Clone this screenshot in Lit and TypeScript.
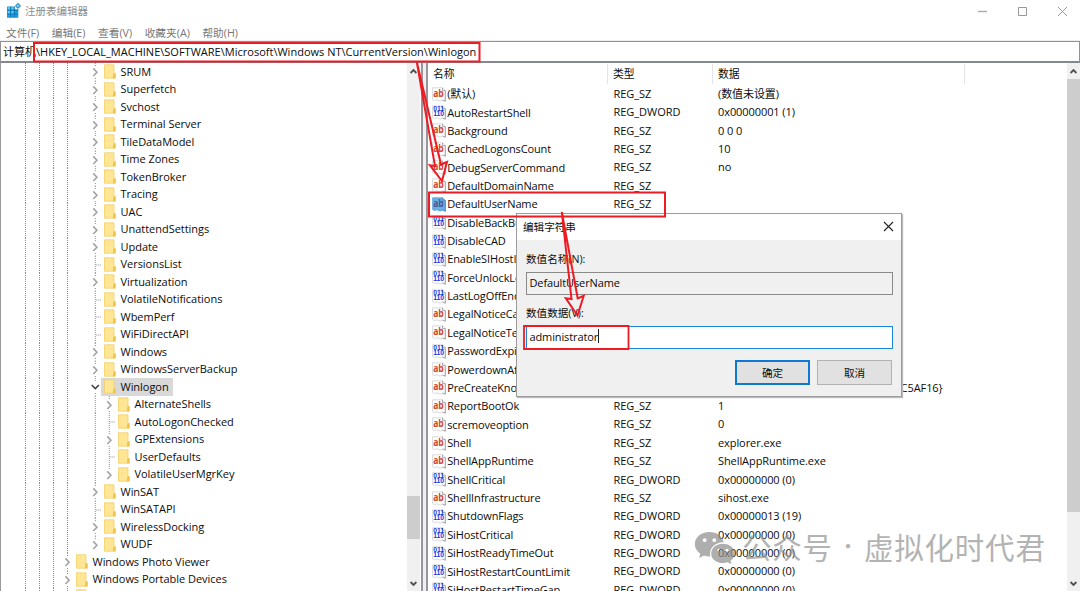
import { LitElement, html, svg, css } from "lit";
import { customElement, property } from "lit/decorators.js";

type TreeNode = { name: string; depth: number; kind: "closed" | "open" | "leaf" };
type Value = { name: string; dword?: boolean; data: string; selected?: boolean };

const node = (name: string, kind: TreeNode["kind"] = "closed", depth = 2): TreeNode => ({ name, kind, depth });

const TREE: TreeNode[] = [
  node("SRUM"), node("Superfetch"), node("Svchost"), node("Terminal Server"), node("TileDataModel"),
  node("Time Zones"), node("TokenBroker"), node("Tracing"), node("UAC"), node("UnattendSettings"),
  node("Update"), node("VersionsList", "leaf"), node("Virtualization"), node("VolatileNotifications", "leaf"),
  node("WbemPerf", "leaf"), node("WiFiDirectAPI", "leaf"), node("Windows"), node("WindowsServerBackup"),
  node("Winlogon", "open"),
  node("AlternateShells", "closed", 3), node("AutoLogonChecked", "leaf", 3), node("GPExtensions", "closed", 3),
  node("UserDefaults", "leaf", 3), node("VolatileUserMgrKey", "closed", 3),
  node("WinSAT"), node("WinSATAPI", "leaf"), node("WirelessDocking"), node("WUDF"),
  node("Windows Photo Viewer", "closed", 0), node("Windows Portable Devices", "closed", 0),
  node("", "closed", 0),
];

const sz = (name: string, data = "", selected = false): Value => ({ name, data, selected });
const dw = (name: string, data = "0x00000000 (0)"): Value => ({ name, data, dword: true });

const VALUES: Value[] = [
  sz("(默认)", "(数值未设置)"), dw("AutoRestartShell", "0x00000001 (1)"), sz("Background", "0 0 0"),
  sz("CachedLogonsCount", "10"), sz("DebugServerCommand", "no"), sz("DefaultDomainName"),
  sz("DefaultUserName", "", true), dw("DisableBackButton", ""), dw("DisableCAD", ""), dw("EnableSIHostIntegration", ""),
  dw("ForceUnlockLogon", ""), dw("LastLogOffEndTime", ""), sz("LegalNoticeCaption"), sz("LegalNoticeText"),
  dw("PasswordExpiryWarning", ""), sz("PowerdownAfterShutdown"),
  sz("PreCreateKnownFolders", "{A520A1A4-1780-4FF6-BD18-167343C5AF16}"), sz("ReportBootOk", "1"),
  sz("scremoveoption", "0"), sz("Shell", "explorer.exe"), sz("ShellAppRuntime", "ShellAppRuntime.exe"),
  dw("ShellCritical"), sz("ShellInfrastructure", "sihost.exe"), dw("ShutdownFlags", "0x00000013 (19)"),
  dw("SiHostCritical"), dw("SiHostReadyTimeOut"), dw("SiHostRestartCountLimit"), dw("SiHostRestartTimeGap"),
];

const FONT = css`
  :host { font-family: "Open Sans", "Noto Sans CJK SC", sans-serif; font-size: 11px; color: #0c0c0c; box-sizing: border-box; }
  * { box-sizing: border-box; }
  svg { display: block; }
`;

@customElement("reg-tree")
class RegTree extends LitElement {
  static styles = [FONT, css`
    :host { display: block; overflow: hidden; height: 528px; border-left: 1px solid #9a9a9e; background: #fff; }
    .row { display: flex; height: 17.5px; align-items: center; }
    .guides { flex: none; height: 17.5px; }
    .label { display: flex; align-items: center; height: 17.5px; white-space: pre; letter-spacing: -.03px; padding: 0 4px 0 3px; gap: 4.5px; }
    .label.on { background: #d9d9d9; }
    .label span { line-height: 16px; padding-bottom: .4px; }
  `];

  private guides(n: TreeNode) {
    const w = 72 + n.depth * 14;
    const own = 66.5 + n.depth * 14 - (n.depth ? 0.2 : 0);
    const lines = [24.5, 38.5, 52.5];
    if (n.depth > 0) lines.push(66.5);
    if (n.depth === 3) lines.push(94.3);
    const last = n.name === "VolatileUserMgrKey" || n.name === "WUDF";
    return html`<svg class="guides" width=${w} height="17.5" viewBox="0 0 ${w} 17.5">
      <g stroke="#8e8e8e" stroke-width="1" stroke-dasharray="1 1" fill="none">
        ${lines.map((x) => svg`<path d="M${x} 0V17.5" />`)}
        ${n.kind === "leaf" ? svg`<path d="M${own} 0V17.5M${own + 1} 9H${own + 7}" />`
          : svg`<path d="M${own} 0V3${last ? "" : "M" + own + " 15V17.5"}" />`}
      </g>
      ${n.kind === "closed" ? svg`<path d="M${own - 2} 5.4L${own + 1.6} 9.2L${own - 2} 13" fill="none" stroke="#a2a2a2" stroke-width="1.6" />` : null}
      ${n.kind === "open" ? svg`<path d="M${own - 3.6} 7L${own} 10.6L${own + 3.6} 7" fill="none" stroke="#444" stroke-width="1.6" />` : null}
    </svg>`;
  }

  render() {
    return TREE.map((n) => html`<div class="row">
      ${this.guides(n)}
      <div class="label ${n.kind === "open" ? "on" : ""}">
        <svg width="12" height="15" viewBox="0 0 12 15">
          <path d="M.5 .8H10V9.5H11.3V14.2H.5Z" fill="#ffe694" stroke="#f3cf63" stroke-width=".8" />
          <path d="M9.3 9.5H11.5V14.2H8.8Z" fill="#efc44f" />
        </svg><span>${n.name}</span>
      </div>
    </div>`);
  }
}

@customElement("value-icon")
class ValueIcon extends LitElement {
  @property({ type: Boolean }) dword = false;
  @property({ type: Boolean }) selected = false;
  static styles = css`
    :host { display: block; width: 14px; height: 15px; }
    svg { display: block; }
    .ab { font: bold 9.8px "Open Sans", sans-serif; }
    .bits { font: bold 6.6px "Liberation Sans", sans-serif; }
  `;
  render() {
    return html`<svg width="14" height="15" viewBox="0 0 14 15">
      <path d="M.6 .8H10.5L13.3 3.5V14.2L10.5 13L8 14.2L5 12.8L2.4 13.6L.6 12.6Z" fill=${this.selected ? "#6aaee6" : "#fff"} stroke=${this.selected ? "#5b9fd8" : "#cfcfcf"} stroke-width=".8" />
      <path d="M10.5 .8V3.6H13.3V14.2L10.5 13" fill="none" stroke=${this.selected ? "#4c8cc2" : "#a0a0a0"} stroke-width=".9" />
      ${this.dword
        ? svg`<text class="bits" fill="#1636e0" x="1.3" y="6.2" textLength="10.6" lengthAdjust="spacingAndGlyphs">011</text><text class="bits" fill="#1636e0" x="1.3" y="11.4" textLength="10.6" lengthAdjust="spacingAndGlyphs">110</text>`
        : svg`<text class="ab" fill=${this.selected ? "#4c5590" : "#d9442a"} x="1.3" y="9.6" textLength="10.4" lengthAdjust="spacingAndGlyphs">ab</text>`}
    </svg>`;
  }
}

@customElement("reg-values")
class RegValues extends LitElement {
  static styles = [FONT, css`
    :host { display: block; overflow: hidden; height: 528px; background: #fff; }
    .head, .row { display: grid; grid-template-columns: 180px 105px 252px 1fr; white-space: pre; }
    .head { height: 22px; padding-top: 1px; }
    .head span { border-right: 1px solid #e4e4e4; line-height: 20px; height: 20px; padding-left: 5px; font-size: 10.8px; }
    .head span:last-child { border: 0; }
    .row { height: 18.365px; line-height: 18px; }
    .name { display: flex; align-items: center; gap: 1.2px; padding-left: 4px; letter-spacing: -.12px; }
    .cell { padding-left: 5.5px; letter-spacing: -.03px; }
    .cell:last-child { padding-left: 5px; letter-spacing: -.08px; }
  `];
  render() {
    return html`<div class="head"><span>名称</span><span>类型</span><span>数据</span><span></span></div>
      ${VALUES.map((v) => html`<div class="row">
        <div class="name"><value-icon ?dword=${v.dword} ?selected=${v.selected}></value-icon><span>${v.name}</span></div>
        <div class="cell">${v.dword ? "REG_DWORD" : "REG_SZ"}</div><div class="cell">${v.data}</div>
      </div>`)}`;
  }
}

@customElement("scroll-track")
class ScrollTrack extends LitElement {
  @property({ type: Number }) before = 0;
  @property({ type: Number }) size = 0;
  static styles = css`
    :host { display: flex; flex-direction: column; width: 13px; height: 528px; background: #f0f0f0; }
    svg { display: block; flex: none; }
    .thumb { background: #cdcdcd; flex: none; }
    .fill { flex: 1; }
  `;
  render() {
    return html`
      <svg width="13" height="16" viewBox="0 0 13 16"><path d="M3.6 10L6.5 7.1L9.4 10" fill="none" stroke="#505050" stroke-width="1.8" /></svg>
      <div style="height:${this.before}px"></div>
      <div class="thumb" style="height:${this.size}px"></div>
      <div class="fill"></div>
      <svg width="13" height="16" viewBox="0 0 13 16"><path d="M3.6 7L6.5 9.9L9.4 7" fill="none" stroke="#505050" stroke-width="1.8" /></svg>`;
  }
}

@customElement("edit-dialog")
class EditDialog extends LitElement {
  static styles = [FONT, css`
    :host { display: flex; flex-direction: column; width: 386px; height: 184px; background: #f0f0f0; border: 1px solid #9c9c9c; box-shadow: 1px 1px 1px #bbb; }
    .title { display: flex; height: 26px; background: #fff; align-items: center; justify-content: space-between; padding: 0 7px 1px 6px; font-size: 10.6px; }
    .body { padding: 12px 8px 0 9px; display: flex; flex-direction: column; }
    label { height: 15px; line-height: 14px; font-size: 10.6px; }
    .field { height: 23px; border: 1px solid #8a8a8a; line-height: 19px; padding: 0 0 3px 2.5px; margin-top: 5px; margin-bottom: 11px; letter-spacing: -.12px; display: flex; align-items: center; }
    .field.active { background: #fff; border-color: #1c86dc; margin-bottom: 11px; }
    .caret { width: 1px; height: 14px; background: #222; }
    .actions { display: flex; justify-content: flex-end; gap: 7px; padding-right: 1px; }
    button { width: 75px; height: 25px; border: 1px solid #b2b2b2; background: #e1e1e1; font: inherit; font-size: 10.6px; color: inherit; padding: 0 0 1px; }
    button.ok { border: 2px solid #0f78d4; }
  `];
  render() {
    return html`<div class="title"><span>编辑字符串</span>
        <svg width="11" height="11" viewBox="0 0 11 11"><path d="M1 1L10 10M10 1L1 10" stroke="#222" stroke-width="1.1" /></svg></div>
      <div class="body">
        <label>数值名称(N):</label><div class="field">DefaultUserName</div>
        <label>数值数据(V):</label><div class="field active">administrator<i class="caret"></i></div>
        <div class="actions"><button class="ok">确定</button><button>取消</button></div>
      </div>`;
  }
}

@customElement("app-root")
class AppRoot extends LitElement {
  static styles = [FONT, css`
    :host { display: flex; flex-direction: column; position: relative; width: 1080px; height: 591px; overflow: hidden; background: #fff; }
    .titlebar { display: flex; height: 22px; align-items: center; padding: 0 12px 0 6px; color: #8d8d8d; }
    .titlebar span { flex: 1; padding: 0 0 1px 4px; font-size: 10.5px; }
    .controls { display: flex; gap: 29px; }
    .menu { display: flex; height: 19px; align-items: center; padding: 1px 0 0 6px; gap: 12.6px; color: #777; white-space: pre; font-size: 10.7px; }
    .address { height: 22px; border: 1px solid #929296; border-bottom: 2px solid #85898f; padding-left: 2px; line-height: 19px; white-space: pre; box-shadow: 0 -1px #eee; letter-spacing: .01px; }
    .main { display: flex; height: 528px; }
    reg-tree { width: 407px; }
    .split { width: 7px; border-left: 2px solid #96969c; border-right: 2px solid #96969c; background: #f0f0f0; margin: 0 0 0 1px; }
    reg-values { flex: 1; }
    edit-dialog { position: absolute; left: 516px; top: 213px; }
    .overlay { position: absolute; left: 0; top: 0; }
    .mark { position: absolute; left: 694px; top: 526px; display: flex; align-items: center; height: 40px; font-size: 29.5px; line-height: 40px; color: #949494; opacity: .7; letter-spacing: .8px; font-family: "Noto Sans CJK SC", sans-serif; font-weight: 400; }
    .mark b { font-weight: 400; width: 31px; text-align: center; font-size: 20px; }
    .mark span { white-space: pre; }
    .mark svg { margin: 3px 7px 0 0; }
  `];
  render() {
    return html`
      <div class="titlebar">
        <svg width="15" height="16" viewBox="0 0 15 16">
          <path d="M1 3.5H8.4V6.2H12.3V14.7H1Z" fill="#1e9bdb" />
          <path d="M1.8 4.3H4V6.6H1.8ZM5.3 4.3H7.6V6.6H5.3ZM1.8 8H4V10.4H1.8ZM5.3 8H7.6V10.4H5.3Z" fill="#58cdf3" />
          <path d="M1 7.3H12.3M1 11.1H12.3M4.6 3.5V14.7M8.4 3.5V14.7" stroke="#0f75b5" stroke-width=".8" />
          <path d="M12 .6L14.3 2.9L12 5.2L9.7 2.9Z" fill="#8fd3f2" stroke="#2b93c9" stroke-width="1.2" />
        </svg>
        <span>注册表编辑器</span>
        <div class="controls">
          <svg width="11" height="11" viewBox="0 0 11 11"><path d="M1 5.5H10" stroke="#aaa" stroke-width="1.4" /></svg>
          <svg width="11" height="11" viewBox="0 0 11 11"><path d="M1.5 1.5H9.5V9.5H1.5Z" fill="none" stroke="#999" /></svg>
          <svg width="11" height="11" viewBox="0 0 11 11"><path d="M1 1L10 10M10 1L1 10" stroke="#999" /></svg>
        </div>
      </div>
      <div class="menu"><span>文件(F)</span><span>编辑(E)</span><span>查看(V)</span><span>收藏夹(A)</span><span>帮助(H)</span></div>
      <div class="address">计算机\\HKEY_LOCAL_MACHINE\\SOFTWARE\\Microsoft\\Windows NT\\CurrentVersion\\Winlogon</div>
      <div class="main">
        <reg-tree></reg-tree><scroll-track .before=${417} .size=${43}></scroll-track>
        <div class="split"></div>
        <reg-values></reg-values><scroll-track .before=${0} .size=${433}></scroll-track>
      </div>
      <edit-dialog></edit-dialog>
      <div class="mark">
        <svg width="41" height="34" viewBox="0 0 41 34">
          <path fill="#8c8c8c" fill-rule="evenodd" d="M15.5 1C7 1 .8 6.5 .8 13.3C.8 17.2 3 20.4 6.3 22.7L5 27L10 24.5Q12.8 25.5 16.4 25.4C14.5 17.5 21 10.9 29.7 11.2C28.3 5 22.5 1 15.5 1ZM10.7 7.3A1.9 1.9 0 1 1 10.6 7.3ZM20.3 7.3A1.9 1.9 0 1 1 20.2 7.3Z" />
          <path fill="#8c8c8c" fill-rule="evenodd" d="M29 12.7C22 12.7 17.2 17 17.2 22.4C17.2 27.8 22 32 29 32Q31.5 32 33.6 31.2L37.5 33.3L36.5 29.8C39 28 40.5 25.4 40.5 22.4C40.5 17 35.7 12.7 29 12.7ZM25.1 17.7A1.6 1.6 0 1 1 25 17.7ZM33 17.7A1.6 1.6 0 1 1 32.9 17.7Z" />
        </svg><span>公众号</span><b>·</b><span>虚拟化时代君</span>
      </div>
      <svg class="overlay" width="1080" height="591" viewBox="0 0 1080 591" fill="none" stroke="#ed1c24" stroke-width="2">
        <path d="M34 43H479.5V61.5H34Z" />
        <path d="M429 192.5H665V216.5H429Z" />
        <path d="M524 326H628.5V349H524Z" stroke-width="1.8" />
        <path d="M416.8 62L435 166L430 165.3L442 181L447 162L441 164.5Z" />
        <path d="M561.8 212L571.5 299L565.8 298.3L577.5 315.5L583.7 295.8L577.7 298.3Z" />
      </svg>`;
  }
}
